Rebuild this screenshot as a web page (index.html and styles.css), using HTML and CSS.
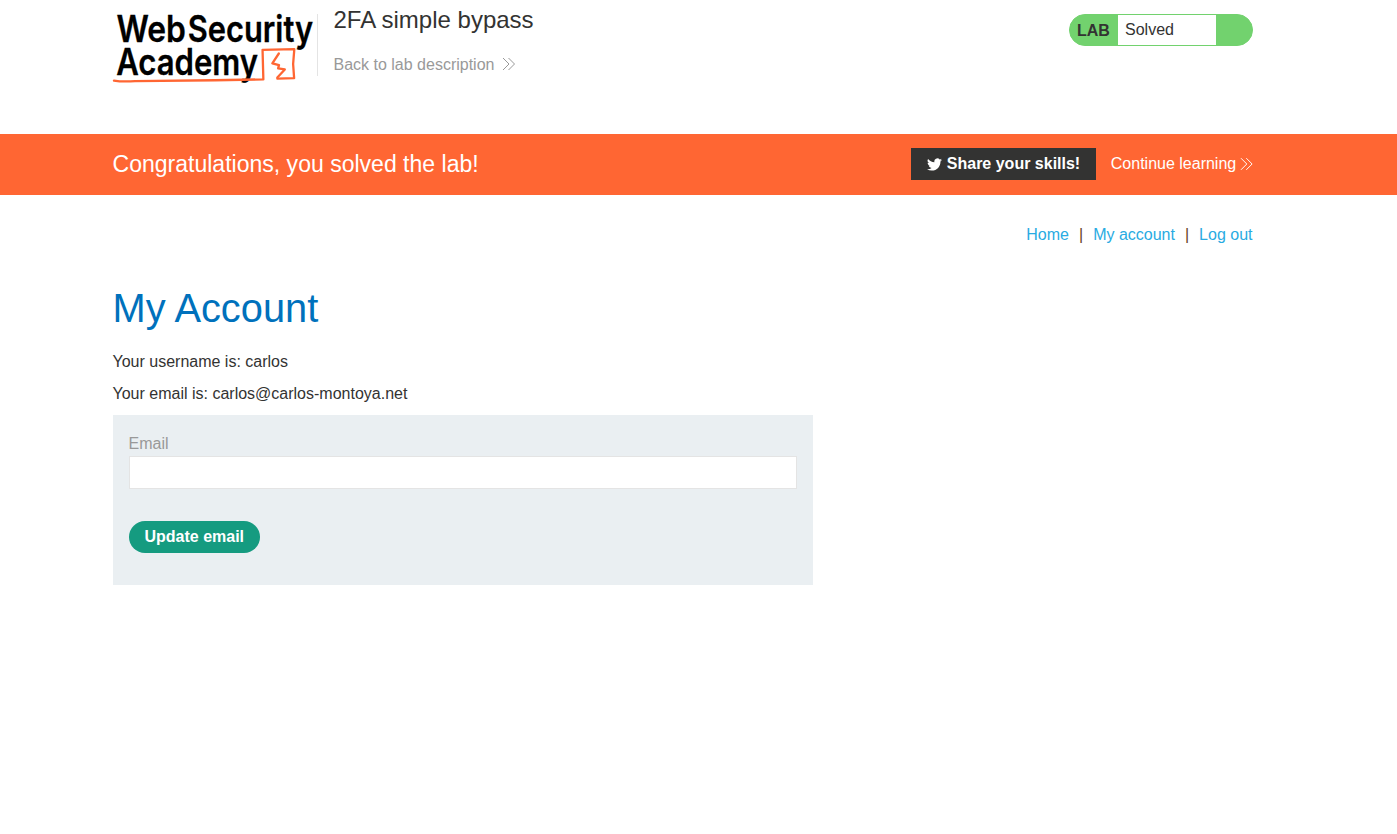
FILE: index.html
```html
<!DOCTYPE html>
<html lang="en">
<head>
<meta charset="utf-8">
<title>2FA simple bypass</title>
<link rel="stylesheet" href="styles.css">
</head>
<body>
<header class="lab-header container">
  <svg class="logo" viewBox="113 0 205 90" role="img" aria-label="Web Security Academy">
    <g class="logo-text">
      <text x="116.500" y="42.500" textLength="69.500" lengthAdjust="spacingAndGlyphs">Web</text>
      <text x="187.800" y="42.500" textLength="125.500" lengthAdjust="spacingAndGlyphs">Security</text>
      <text x="116.200" y="75.300" textLength="142" lengthAdjust="spacingAndGlyphs">Academy</text>
    </g>
    <g class="logo-mark">
      <path d="M114 80.600Q122 82 135 81.200L215 80.300L263.500 79.400L262.700 49.800L294.500 49.200L293.300 64L294.300 78.200L277.500 78.700"/>
      <path d="M279 53.500L272.500 63.300L279.200 65.100L278.300 68.300L285 69.500L277.500 77.500"/>
    </g>
  </svg>
  <div class="title-block">
    <h2>2FA simple bypass</h2>
    <a class="back-link" href="#">Back to lab description <svg class="chevrons" viewBox="0 0 13 14"><path d="M1 1l6 6-6 6M6.500 1l6 6-6 6"/></svg></a>
  </div>
  <div class="lab-status"><strong>LAB</strong><span>Solved</span></div>
</header>
<section class="banner">
  <div class="container banner-row">
    <h4>Congratulations, you solved the lab!</h4>
    <a class="share" href="#"><svg class="bird" viewBox="0 0 24 24"><path d="M24 4.600a10 10 0 0 1-2.800.8 5 5 0 0 0 2.200-2.700c-1 .6-2 1-3.100 1.200a4.900 4.900 0 0 0-8.400 4.500C7.700 8.100 4.100 6.100 1.700 3.200a4.900 4.900 0 0 0 1.500 6.500 5 5 0 0 1-2.200-.6c0 2.300 1.600 4.400 3.900 4.900a5 5 0 0 1-2.200.1 4.900 4.900 0 0 0 4.600 3.400A9.900 9.900 0 0 1 0 19.500 14 14 0 0 0 7.500 21.700c9.200 0 14.400-7.700 14-14.600A10 10 0 0 0 24 4.600z"/></svg>Share your skills!</a>
    <a class="continue" href="#">Continue learning <svg class="chevrons" viewBox="0 0 13 14"><path d="M1 1l6 6-6 6M6.500 1l6 6-6 6"/></svg></a>
  </div>
</section>
<main class="container">
  <nav class="links"><a href="#">Home</a><span>|</span><a href="#">My account</a><span>|</span><a href="#">Log out</a></nav>
  <h1>My Account</h1>
  <p>Your username is: carlos</p>
  <p>Your email is: carlos@carlos-montoya.net</p>
  <form class="email-form">
    <label for="email">Email</label>
    <input id="email" type="email">
    <button type="button">Update email</button>
  </form>
</main>
</body>
</html>
```
FILE: styles.css
```css
* { box-sizing: border-box; }
body {
  margin: 0;
  background: #fff;
  color: #333332;
  font: 16px/20px "Liberation Sans", Arial, sans-serif;
}
h1, h2, h4, p { margin: 0; font-weight: 400; }
a { text-decoration: none; }
.container { width: 1140px; margin-left: 112.5px; }
.lab-header { display: flex; align-items: flex-start; height: 134px; }
.logo { width: 204.8px; height: 90px; flex: none; overflow: visible; }
.logo-text { font: 600 36.5px Inter, sans-serif; fill: #000; stroke: #000; stroke-width: .3; }
.logo-mark { fill: none; stroke: #ff6633; stroke-width: 2.3; stroke-linejoin: round; stroke-linecap: round; }
.title-block {
  flex: 1;
  padding-left: 15.2px;
  height: 62px;
  margin-top: 14px;
  border-left: 1px solid #e4e4e4;
}
h2 { font-size: 24px; line-height: 28px; margin-top: -8px; }
.back-link { display: flex; align-items: center; margin-top: 21px; color: #999; }
.chevrons { width: 13px; height: 14px; margin: -2px 0 0 8px; fill: none; stroke: currentColor; stroke-width: 1; }
.lab-status {
  display: flex;
  width: 184px;
  height: 32px;
  margin-top: 14px;
  border: 1px solid #72d26e;
  border-radius: 16px;
  background: #72d26e;
  overflow: hidden;
  line-height: 30px;
}
.lab-status strong { width: 48px; padding-left: 7.5px; line-height: 32px; }
.lab-status span { width: 98px; padding-left: 7.5px; background: #fff; }
.banner { background: #ff6633; color: #fff; height: 61px; }
.banner-row { display: flex; align-items: center; height: 60px; }
h4 { flex: 1; font-size: 23.04px; }
.share {
  display: flex;
  align-items: center;
  width: 185px;
  height: 32px;
  padding-left: 16px;
  background: #333332;
  color: #fff;
  font-weight: 700;
}
.bird { width: 15px; height: 15px; margin: 0 5px 0 0; fill: #fff; }
.continue { display: flex; align-items: center; margin-left: 15px; color: #fff; }
.continue .chevrons { margin: -1px -0.5px 0 4.2px; width: 12.6px; }
.links { display: flex; justify-content: flex-end; gap: 10px; padding-top: 30px; }
.links a { color: #29abe2; }
.links span { color: #663c1c; }
h1 { margin-top: 39px; color: #0071bc; font-size: 39.8px; line-height: 48px; }
p { margin-top: 12px; }
h1 + p { margin-top: 20px; }
.email-form {
  display: flex;
  flex-direction: column;
  align-items: flex-start;
  width: 700px;
  height: 170px;
  margin-top: 11px;
  padding: 19px 16px;
  background: #eaeff2;
}
label { color: #999; }
input {
  width: 668px;
  height: 33px;
  margin-top: 2px;
  border: 1px solid #e4e4e4;
  background: #fff;
}
button {
  width: 131px;
  height: 32px;
  margin-top: 32px;
  padding: 0 0 0 .5px;
  border: 0;
  border-radius: 16px;
  background: #159b80;
  color: #fff;
  font: 700 16px/32px "Liberation Sans", Arial, sans-serif;
}
```
